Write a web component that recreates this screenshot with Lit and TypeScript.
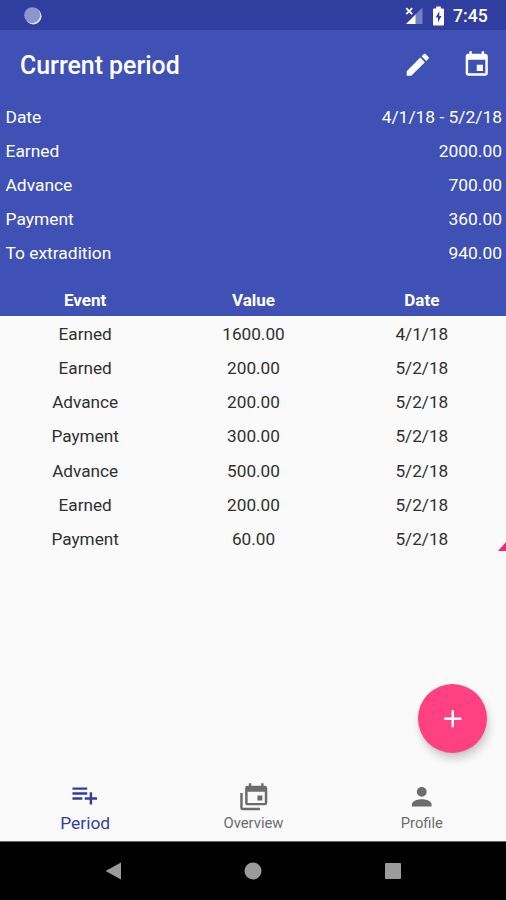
import { LitElement, html, css } from "lit";
import { customElement } from "lit/decorators.js";

const summary = [
  ["Date", "4/1/18 - 5/2/18"],
  ["Earned", "2000.00"],
  ["Advance", "700.00"],
  ["Payment", "360.00"],
  ["To extradition", "940.00"],
];

const events = [
  ["Earned", "1600.00", "4/1/18"],
  ["Earned", "200.00", "5/2/18"],
  ["Advance", "200.00", "5/2/18"],
  ["Payment", "300.00", "5/2/18"],
  ["Advance", "500.00", "5/2/18"],
  ["Earned", "200.00", "5/2/18"],
  ["Payment", "60.00", "5/2/18"],
];

const icons = {
  pencil:
    "M3 17.25V21h3.75L17.81 9.94l-3.75-3.75L3 17.25zM20.71 7.04c.39-.39.39-1.02 0-1.41l-2.34-2.34c-.39-.39-1.02-.39-1.41 0l-1.83 1.83 3.75 3.75 1.83-1.83z",
  calendar:
    "M19,19H5V8H19M16,1V3H8V1H6V3H5C3.89,3 3,3.89 3,5V19A2,2 0 0,0 5,21H19A2,2 0 0,0 21,19V5C21,3.89 20.1,3 19,3H18V1M17,12H12V17H17V12Z",
  playlist:
    "M2,16H10V14H2M18,14V10H16V14H12V16H16V20H18V16H22V14M14,6H2V8H14M14,10H2V12H14V10Z",
  calendars:
    "M21,17V8H7V17H21M21,3A2,2 0 0,1 23,5V17A2,2 0 0,1 21,19H7C5.89,19 5,18.1 5,17V5A2,2 0 0,1 7,3H8V1H10V3H18V1H20V3H21M3,21H17V23H3C1.89,23 1,22.1 1,21V9H3V21M19,15H15V11H19V15Z",
  person:
    "M12,4A4,4 0 0,1 16,8A4,4 0 0,1 12,12A4,4 0 0,1 8,8A4,4 0 0,1 12,4M12,14C16.42,14 20,15.79 20,18V20H4V18C4,15.79 7.58,14 12,14Z",
  plus: "M19,13H13V19H11V13H5V11H11V5H13V11H19V13Z",
};

const icon = (path: string) =>
  html`<svg class="icon" viewBox="0 0 24 24"><path d=${path}></path></svg>`;

@customElement("app-root")
export class AppRoot extends LitElement {
  static styles = css`
    :host {
      display: flex;
      flex-direction: column;
      position: relative;
      width: 506px;
      height: 900px;
      overflow: hidden;
      box-sizing: border-box;
      background: #fafafa;
      font-family: Roboto, "Liberation Sans", sans-serif;
      font-size: 17.2px;
      color: #303030;
    }
    svg {
      display: block;
      flex: none;
      fill: currentColor;
    }
    .icon {
      width: 29.5px;
      height: 29.5px;
    }
    .status {
      flex: none;
      height: 30px;
      box-sizing: border-box;
      padding: 1px 18px 0 24px;
      display: flex;
      align-items: center;
      background: #303f9f;
      color: #fff;
    }
    .spacer {
      flex: 1;
    }
    .signal {
      margin-right: 10px;
    }
    .battery {
      margin-right: 9px;
    }
    .clock {
      font-weight: 500;
      font-size: 17.6px;
      width: 35px;
      white-space: nowrap;
    }
    .head {
      flex: none;
      height: 286px;
      box-sizing: border-box;
      background: #3f51b5;
      color: #fff;
      display: flex;
      flex-direction: column;
    }
    .bar {
      height: 69px;
      display: flex;
      align-items: center;
      padding: 0 14.5px 0 20px;
      gap: 30px;
    }
    .title {
      flex: 1;
      margin: 2px 0 0;
      font-size: 24.9px;
      font-weight: 500;
    }
    .line {
      height: 34.2px;
      display: flex;
      align-items: center;
      justify-content: space-between;
      padding: 1px 4px 0 5.5px;
      box-sizing: border-box;
      font-size: 17.4px;
    }
    .row {
      height: 34.2px;
      display: grid;
      grid-template-columns: repeat(3, 1fr);
      align-items: center;
      text-align: center;
      padding: 1.5px 0 0 1px;
      box-sizing: border-box;
      flex: none;
    }
    .row.columns {
      margin-top: auto;
      font-weight: 700;
      font-size: 17px;
    }
    .list {
      flex: 1;
      min-height: 0;
    }
    .tabs {
      flex: none;
      height: 69px;
      display: grid;
      grid-template-columns: repeat(3, 1fr);
      padding-left: 1px;
      color: #6c6c6c;
      font-size: 14.8px;
    }
    .tab {
      display: flex;
      flex-direction: column;
      align-items: center;
      padding-top: 10px;
      box-sizing: border-box;
    }
    .label {
      line-height: 20px;
      margin-top: 1.5px;
    }
    .tab.active {
      color: #303f9f;
      font-size: 17.4px;
      padding-top: 7.5px;
    }
    .tab.active .label {
      margin-top: 4px;
    }
    .system {
      flex: none;
      height: 59px;
      box-sizing: border-box;
      background: #000;
      border-top: 1px solid #666;
      color: #9b9b9b;
      display: flex;
      justify-content: center;
      align-items: center;
      gap: 122px;
    }
    .fab {
      position: absolute;
      right: 19px;
      bottom: 147px;
      width: 69px;
      height: 69px;
      padding: 0;
      border: 0;
      border-radius: 50%;
      background: #ff4081;
      color: #fff;
      display: flex;
      align-items: center;
      justify-content: center;
      box-shadow: 2px 6px 8px rgba(0, 0, 0, 0.18), 0 1px 3px rgba(0, 0, 0, 0.08);
    }
    .corner {
      position: absolute;
      right: 0;
      top: 542px;
      color: #f0287c;
    }
  `;

  render() {
    return html`
      <div class="status">
        <svg width="18" height="18" viewBox="0 0 18 18">
          <circle cx="9.3" cy="9.3" r="8.2" fill="#e2e5f6"></circle>
          <circle cx="8.2" cy="8.2" r="8" fill="#8d96cb"></circle>
        </svg>
        <div class="spacer"></div>
        <svg class="signal" width="18" height="18" viewBox="0 0 18 18">
          <path d="M17.5 0.5V17H10V8z" fill="#7480c3"></path>
          <path d="M10.5 7.5V17H1z"></path>
          <path d="M1.2 1.2l6 6M7.2 1.2l-6 6" stroke="#fff" stroke-width="1.8"></path>
        </svg>
        <svg class="battery" width="11" height="20" viewBox="0 0 11 20">
          <path d="M3.2 0.5h4.6v2H10a1 1 0 0 1 1 1V18.5a1 1 0 0 1-1 1H1a1 1 0 0 1-1-1V3.5a1 1 0 0 1 1-1H3.2z"></path>
          <path d="M6.3 5.2L2.6 11.6H5V16.5L8.5 10H6.3z" fill="#303f9f"></path>
        </svg>
        <div class="clock">7:45</div>
      </div>
      <div class="head">
        <div class="bar">
          <h1 class="title">Current period</h1>
          ${icon(icons.pencil)} ${icon(icons.calendar)}
        </div>
        ${summary.map(
          ([name, value]) =>
            html`<div class="line"><span>${name}</span><span>${value}</span></div>`
        )}
        <div class="row columns">
          <span>Event</span><span>Value</span><span>Date</span>
        </div>
      </div>
      <div class="list">
        ${events.map(
          (cells) =>
            html`<div class="row">${cells.map((c) => html`<span>${c}</span>`)}</div>`
        )}
      </div>
      <div class="tabs">
        <div class="tab active">${icon(icons.playlist)}<span class="label">Period</span></div>
        <div class="tab">${icon(icons.calendars)}<span class="label">Overview</span></div>
        <div class="tab">${icon(icons.person)}<span class="label">Profile</span></div>
      </div>
      <div class="system">
        <svg width="18" height="18" viewBox="0 0 18 18"><path d="M17 0.5V17.5L1.5 9z"></path></svg>
        <svg width="18" height="18" viewBox="0 0 18 18"><circle cx="9" cy="9" r="8.5"></circle></svg>
        <svg width="18" height="18" viewBox="0 0 18 18"><rect x="1" y="1" width="16" height="16" rx="1"></rect></svg>
      </div>
      <button class="fab" aria-label="Add">${icon(icons.plus)}</button>
      <svg class="corner" width="8" height="9" viewBox="0 0 8 9"><path d="M8 0V9H0z"></path></svg>
    `;
  }
}
